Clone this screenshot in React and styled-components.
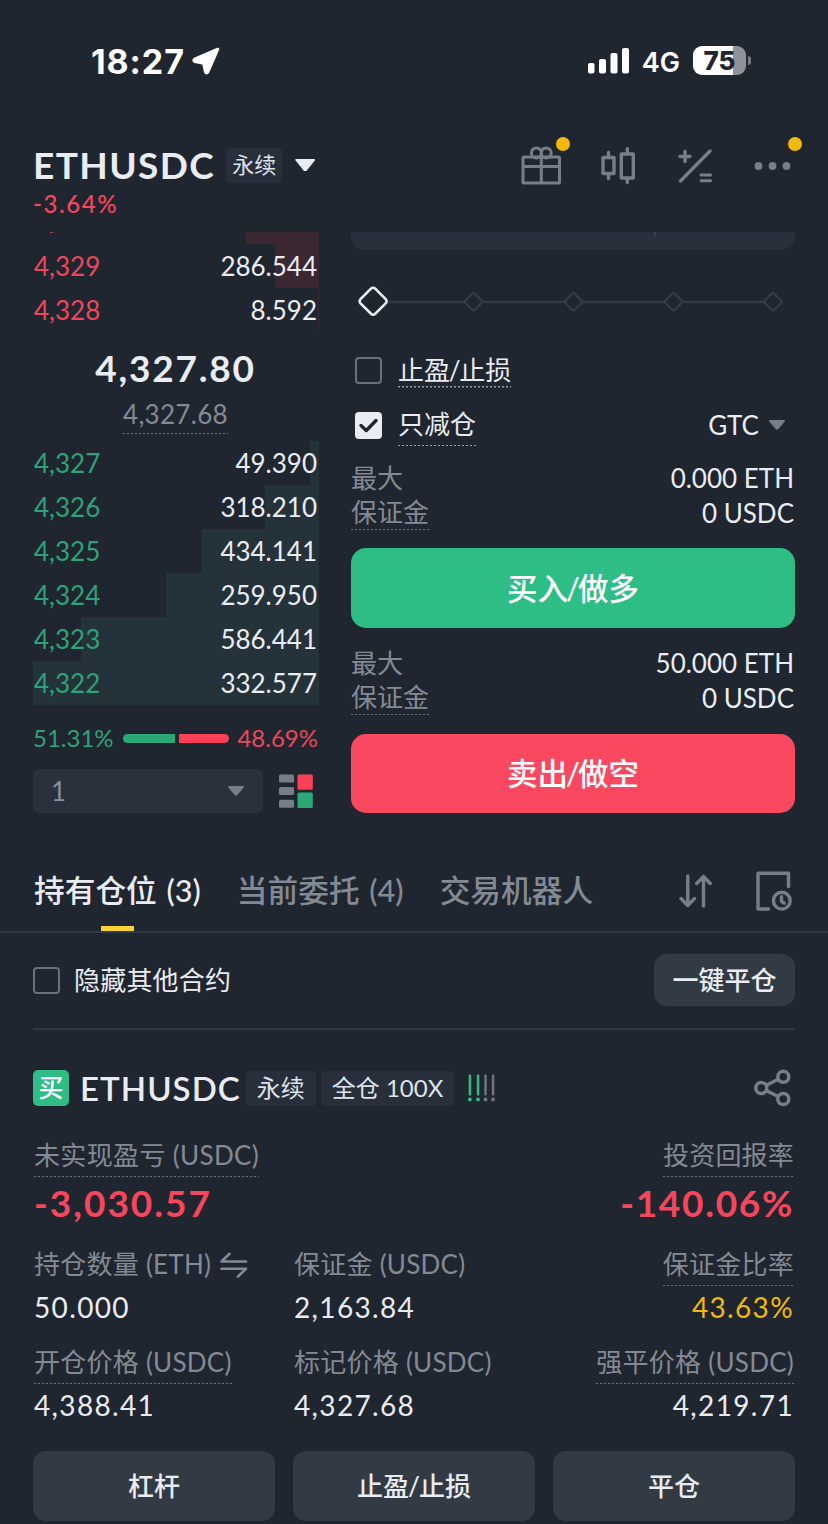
import styled, { createGlobalStyle } from "styled-components";

const GlobalStyle = createGlobalStyle`
    * { box-sizing: border-box; }
    body {
        margin: 0;
        background: #20262f;
        color: #eaecf3;
        font-family: Lato, "Noto Sans CJK SC", sans-serif;
        font-size: 26px;
    }
    button, h1, h2 { font: inherit; margin: 0; padding: 0; border: 0; }
    svg { display: block; flex: none; }
`;

const GRAY = "#787e89";
const LABEL = "#848a94";
const RED = "#f6465d";
const GREEN = "#2ebd85";

const Screen = styled.div`
    width: 828px;
    height: 1524px;
    overflow: hidden;
    display: flex;
    flex-direction: column;
`;

/* ---------- text ---------- */
const Text = styled.span`
    display: block;
    flex: none;
    white-space: nowrap;
    font-size: ${p => p.$size || 26}px;
    line-height: ${p => p.$lh || 36}px;
    font-weight: ${p => p.$weight || 400};
    color: ${p => p.$color || "#eaecf3"};
    letter-spacing: ${p => p.$ls || 0}px;
    word-spacing: ${p => p.$ws || 0}px;
`;
const Dotted = styled(Text)`
    width: fit-content;
    padding-top: ${p => p.$pt || 0}px;
    padding-bottom: ${p => p.$gap || 0}px;
    background: repeating-linear-gradient(90deg, ${p => p.$dot || "#6c727c"} 0 2px, transparent 2px 4px) left bottom / 100% 1.5px no-repeat;
`;
const Slash = styled.span`
    margin: 0 ${p => p.$m || -2}px;
`;

/* ---------- status bar ---------- */
const StatusBar = styled.div`
    height: 121px;
    padding: 0 77px 0 91px;
    display: flex;
    justify-content: space-between;
    align-items: center;
    font-family: Inter, sans-serif;
    color: #fff;
`;
const Time = styled.div`
    display: flex;
    align-items: center;
    gap: 7px;
    padding-top: 1px;
    font-size: 34px;
    font-weight: 700;
    letter-spacing: 0.9px;
`;
const Signal = styled.div`
    display: flex;
    align-items: center;
    font-size: 27px;
    font-weight: 600;
`;
const Network = styled.span`
    margin: 3px 13px 0 13px;
`;
const Battery = styled.div`
    width: 53px;
    height: 29px;
    border-radius: 9px;
    background: linear-gradient(90deg, #fff 75%, #8f929b 75%);
    color: #20262f;
    font-size: 26px;
    line-height: 29px;
    font-weight: 800;
    text-align: center;
`;
const BatteryTip = styled.div`
    width: 3px;
    height: 9px;
    margin-left: 2px;
    border-radius: 0 4px 4px 0;
    background: #767a84;
`;

/* ---------- header ---------- */
const Header = styled.header`
    height: 111px;
    padding: 22px 36px 0 33px;
    display: flex;
    justify-content: space-between;
`;
const PairRow = styled.div`
    height: 44px;
    display: flex;
    align-items: center;
`;
const Tag = styled.span`
    height: ${p => p.$h || 35}px;
    line-height: ${p => (p.$h || 35) - 1}px;
    padding: 0 ${p => p.$px}px;
    margin-left: ${p => p.$ml}px;
    border-radius: 4px;
    background: #282e3a;
    font-size: ${p => p.$size || 24}px;
    color: #dfe2ea;
    white-space: nowrap;
`;
const HeaderIcons = styled.div`
    height: 44px;
    display: flex;
    align-items: center;
    gap: 37px;
`;
const IconWrap = styled.div`
    position: relative;
`;
const Dot = styled.i`
    position: absolute;
    width: 14px;
    height: 14px;
    border-radius: 50%;
    background: #f0b90b;
    top: ${p => p.$top}px;
    right: ${p => p.$right}px;
`;

/* ---------- trade area ---------- */
const Trade = styled.section`
    height: 608px;
    padding: 0 33px;
    display: flex;
    justify-content: space-between;
`;
const Book = styled.div`
    width: 286px;
    display: flex;
    flex-direction: column;
`;
const BookRow = styled.div`
    height: 44px;
    display: flex;
    justify-content: space-between;
    align-items: center;
    padding: 0 2px 0 1px;
    background: linear-gradient(${p => p.$bg}, ${p => p.$bg}) right top / ${p => p.$depth}px 100% no-repeat;
`;
const ClippedRow = styled(BookRow)`
    height: 12px;
    align-items: flex-start;
    padding-left: 17px;
`;
const CommaTail = styled.i`
    width: 3px;
    height: 1px;
    background: #a8384a;
`;
const Mid = styled.div`
    height: 109px;
    display: flex;
    flex-direction: column;
    align-items: center;
    padding: 13px 1px 0 0;
`;
const Ratio = styled.div`
    height: 64px;
    padding: 2px 1px 0 0;
    display: flex;
    align-items: center;
    justify-content: space-between;
`;
const RatioBar = styled.div`
    display: grid;
    grid-template-columns: 52px 50px;
    gap: 4px;
    height: 9px;
`;
const RatioPart = styled.div`
    background: ${p => p.$bg};
    border-radius: ${p => p.$r};
`;
const BookTools = styled.div`
    display: flex;
    align-items: center;
    justify-content: space-between;
    padding-right: 6px;
`;
const Select = styled.div`
    width: 230px;
    height: 44px;
    padding: 0 19px 0 18px;
    border-radius: 7px;
    background: #2a303c;
    display: flex;
    align-items: center;
    justify-content: space-between;
`;

const Form = styled.div`
    width: 444px;
    display: flex;
    flex-direction: column;
`;
const InputBottom = styled.div`
    height: 18px;
    border-radius: 0 0 14px 14px;
    background: #29303c;
    display: flex;
    justify-content: flex-end;
    padding-right: 139px;
`;
const InputDivider = styled.div`
    width: 2px;
    height: 4px;
    background: #39404b;
`;
const SliderWrap = styled.div`
    height: 103px;
    display: flex;
    align-items: center;
`;
const CheckRow = styled.div`
    height: ${p => p.$h}px;
    display: flex;
    align-items: center;
    padding: ${p => p.$pt || 0}px 10px 0 4px;
    gap: 16px;
`;
const CheckLabel = styled.div`
    height: ${p => p.$h}px;
    flex: 1;
`;
const Box = styled.div`
    width: 27px;
    height: 27px;
    border-radius: 4px;
    border: 2px solid ${p => (p.$on ? "#eaecf3" : "#6b717c")};
    background: ${p => (p.$on ? "#eaecf3" : "transparent")};
    flex: none;
`;
const Caret = styled.i`
    width: ${p => p.$w || 16}px;
    height: ${p => p.$h || 10}px;
    margin-left: ${p => p.$ml || 0}px;
    background: ${p => p.$color || GRAY};
    clip-path: polygon(4% 0, 96% 0, 100% 12%, 56% 96%, 44% 96%, 0 12%);
`;
const Limits = styled.div`
    height: ${p => p.$h}px;
    padding: ${p => p.$pt}px 1px 0 0;
`;
const LimitRow = styled.div`
    height: 35px;
    display: flex;
    justify-content: space-between;
`;
const BigButton = styled.button`
    flex: none;
    height: ${p => p.$h}px;
    border-radius: 15px;
    background: ${p => p.$bg};
    color: #fff;
    font-size: 30.5px;
    font-weight: 500;
    line-height: 78px;
    padding-bottom: 1px;
`;

/* ---------- tabs ---------- */
const Tabs = styled.nav`
    height: 93px;
    padding: 0 36px 0 34px;
    border-bottom: 2px solid #343a44;
    display: flex;
    align-items: stretch;
`;
const Tab = styled.div`
    height: 92px;
    margin-right: 36px;
    display: flex;
    flex-direction: column;
    align-items: center;
    justify-content: space-between;
    padding-top: 29px;
`;
const TabLine = styled.div`
    width: 33px;
    height: 5px;
    margin-bottom: 1px;
    background: #fcd535;
`;
const TabIcons = styled.div`
    margin-left: auto;
    height: 101px;
    display: flex;
    align-items: center;
    gap: 43px;
`;
const Filter = styled.div`
    height: 97px;
    margin: 0 33px;
    border-bottom: 2px solid #333943;
    display: flex;
    align-items: center;
    gap: 14px;
    padding-bottom: 1px;
`;
const SoftButton = styled.button`
    height: ${p => p.$h}px;
    width: ${p => p.$w}px;
    border-radius: 13px;
    background: #323b44;
    color: #eaecf3;
    font-weight: 500;
    font-size: 26px;
    line-height: ${p => p.$h}px;
`;
const Push = styled.div`
    margin-left: auto;
`;

/* ---------- position card ---------- */
const Card = styled.section`
    padding: 40px 33px 0;
`;
const CardHead = styled.div`
    height: 36px;
    display: flex;
    align-items: center;
    padding-right: 4px;
`;
const Side = styled.span`
    width: 36px;
    height: 36px;
    margin-right: 11px;
    border-radius: 5px;
    background: ${GREEN};
    color: #fff;
    font-size: 25px;
    font-weight: 500;
    line-height: 35px;
    text-align: center;
`;
const Risk = styled.div`
    margin-left: 14px;
`;
const Pnl = styled.div`
    height: 140px;
    padding: 31px 1px 0;
    display: flex;
    justify-content: space-between;
`;
const Grid = styled.div`
    display: grid;
    grid-template-columns: 260px 260px 1fr;
    padding: 0 1px;
`;
const Cell = styled.div`
    height: 98px;
    display: flex;
    flex-direction: column;
    align-items: ${p => (p.$end ? "flex-end" : "flex-start")};
`;
const LabelLine = styled.div`
    height: ${p => p.$h || 43}px;
    display: flex;
    align-items: flex-start;
    gap: 9px;
`;
const SwapWrap = styled.div`
    padding-top: 6px;
`;
const Actions = styled.div`
    display: grid;
    grid-template-columns: repeat(3, 242px);
    justify-content: space-between;
    padding-top: 9px;
`;

const asks = [
    { price: "4,329", size: "286.544", depth: 44 },
    { price: "4,328", size: "8.592", depth: 1 },
];
const bids = [
    { price: "4,327", size: "49.390", depth: 9 },
    { price: "4,326", size: "318.210", depth: 54 },
    { price: "4,325", size: "434.141", depth: 117 },
    { price: "4,324", size: "259.950", depth: 153 },
    { price: "4,323", size: "586.441", depth: 238 },
    { price: "4,322", size: "332.577", depth: 286 },
];

function LocationArrow() {
    return (
        <svg width="28" height="28" viewBox="0 0 28 28" fill="#fff" stroke="#fff" strokeWidth="3" strokeLinejoin="round">
            <path d="M25.8 2.2 2.6 12.2Q1 13.4 2.8 14.6L11.6 16.2 13.4 25Q14.6 26.8 15.8 25.2Z" />
        </svg>
    );
}

function SignalBars() {
    return (
        <svg width="41" height="27" viewBox="0 0 41 27" fill="#fff">
            <rect x="0" y="16" width="6.5" height="10.5" rx="2" />
            <rect x="11" y="12" width="7" height="14.5" rx="2" />
            <rect x="22.5" y="6" width="7" height="20.5" rx="2" />
            <rect x="34" y="1" width="7" height="25.5" rx="2" />
        </svg>
    );
}

function GiftIcon() {
    return (
        <svg width="40" height="40" viewBox="0 0 40 40" fill="none" stroke={GRAY} strokeWidth="3" strokeLinejoin="round">
            <rect x="2" y="12" width="36.5" height="26" rx="1" />
            <path d="M2 21.5H38.5M20.3 11V38" />
            <circle cx="15.4" cy="7.9" r="5" />
            <circle cx="25.2" cy="7.9" r="5" />
        </svg>
    );
}

function CandleIcon() {
    return (
        <svg width="40" height="40" viewBox="0 0 40 40" fill="none" stroke={GRAY} strokeWidth="3.4" strokeLinecap="round" strokeLinejoin="round">
            <rect x="5" y="12.5" width="11" height="16" />
            <path d="M10.5 7.5V12M10.5 29V33.5" />
            <rect x="23.3" y="9" width="12" height="24" />
            <path d="M29.3 3.8V8.5M29.3 33.5V37.5" />
        </svg>
    );
}

function CalcIcon() {
    return (
        <svg width="40" height="40" viewBox="0 0 40 40" fill="none" stroke={GRAY} strokeWidth="3.4" strokeLinecap="round">
            <path d="M5.5 36 35 6" />
            <path d="M5 11.5H15M10 6.5V16.5" />
            <path d="M26 30H35.5M26 35.8H35.5" strokeWidth="3" />
        </svg>
    );
}

function MoreIcon() {
    return (
        <svg width="40" height="40" viewBox="0 0 40 40" fill={GRAY}>
            <circle cx="6.5" cy="21" r="3.9" />
            <circle cx="20.5" cy="21" r="3.9" />
            <circle cx="34.5" cy="21" r="3.9" />
        </svg>
    );
}

function Slider() {
    return (
        <svg width="444" height="40" viewBox="0 0 444 40" fill="#20262f" strokeLinejoin="round">
            <path d="M22 20H422" stroke="#323943" strokeWidth="2.5" />
            {[122.5, 222.5, 322.5, 422].map(x => (
                <rect key={x} x={x - 6.6} y={13.2} width="13.2" height="13.2" rx="2" stroke="#343b45" strokeWidth="2.2" transform={`rotate(45 ${x} 19.8)`} />
            ))}
            <rect x="11.7" y="8.8" width="20.8" height="20.8" rx="3" stroke="#eaecf3" strokeWidth="2.6" transform="rotate(45 22.1 19.2)" />
        </svg>
    );
}

function BookModeIcon() {
    return (
        <svg width="34" height="34" viewBox="0 0 34 34">
            <g fill={GRAY}>
                <rect x="0" y="0.5" width="15" height="8" rx="1.5" />
                <rect x="0" y="13" width="15" height="8" rx="1.5" />
                <rect x="0" y="25.7" width="15" height="8" rx="1.5" />
            </g>
            <rect x="18.5" y="0.5" width="15.3" height="15.3" rx="1.5" fill="#fb4058" />
            <rect x="18.5" y="18.6" width="15.3" height="15.3" rx="1.5" fill="#2aa876" />
        </svg>
    );
}

function SortIcon() {
    return (
        <svg width="33" height="34" viewBox="0 0 33 34" fill="none" stroke={GRAY} strokeWidth="3.4" strokeLinecap="round" strokeLinejoin="round">
            <path d="M8.8 2V31.5M2 24.5 8.8 31.5 15.5 24.5" />
            <path d="M24.5 32V2.5M17.7 9.5 24.5 2.5 31.2 9.5" />
        </svg>
    );
}

function HistoryIcon() {
    return (
        <svg width="37" height="40" viewBox="0 0 37 40" fill="none" stroke={GRAY} strokeWidth="3.4" strokeLinecap="round" strokeLinejoin="round">
            <path d="M13.5 38H3V2.3H33.5V15.5" />
            <circle cx="26.8" cy="29.7" r="8.4" />
            <path d="M26.5 25.8V30.3L29.2 32.2" />
        </svg>
    );
}

function RiskIcon() {
    return (
        <svg width="28" height="28" viewBox="0 0 28 28">
            {[1.9, 10, 17.5, 25].map((x, i) => (
                <g key={x} fill={i < 2 ? GREEN : "#6f7580"}>
                    <rect x={x - 1.2} y="0.5" width="2.5" height="21" rx="1" />
                    <circle cx={x} cy="25.5" r="1.9" />
                </g>
            ))}
        </svg>
    );
}

function ShareIcon() {
    return (
        <svg width="37" height="38" viewBox="0 0 37 38" fill="none" stroke={GRAY} strokeWidth="3.5">
            <circle cx="7.3" cy="19" r="5.5" />
            <circle cx="29.3" cy="7.8" r="5.5" />
            <circle cx="29.3" cy="30" r="5.5" />
            <path d="M12.3 16.3 24.3 10.3M12.3 21.7 24.3 27.5" />
        </svg>
    );
}

function SwapIcon() {
    return (
        <svg width="28" height="26" viewBox="0 0 28 26" fill="none" stroke={LABEL} strokeWidth="2.6" strokeLinecap="round" strokeLinejoin="round">
            <path d="M26 9.5H1.5L9.5 1.8" />
            <path d="M1.5 16.7H26L18 24.5" />
        </svg>
    );
}

function MaxInfo({ amount, pt, h }) {
    return (
        <Limits $pt={pt} $h={h}>
            <LimitRow>
                <Text $color={LABEL}>最大</Text>
                <Text>{amount}</Text>
            </LimitRow>
            <LimitRow>
                <Dotted $color={LABEL} $lh={34}>保证金</Dotted>
                <Text>0 USDC</Text>
            </LimitRow>
        </Limits>
    );
}

function OrderBook() {
    return (
        <Book>
            <ClippedRow $bg="#3a2731" $depth={73}>
                <CommaTail />
            </ClippedRow>
            {asks.map(r => (
                <BookRow key={r.price} $bg="#3a2731" $depth={r.depth}>
                    <Text $color="#ee465c">{r.price}</Text>
                    <Text>{r.size}</Text>
                </BookRow>
            ))}
            <Mid>
                <Text $size={37} $lh={46} $weight={700} $ls={1.8}>4,327.80</Text>
                <Dotted $color={LABEL} $lh={40} $pt={3} $ls={0.3}>4,327.68</Dotted>
            </Mid>
            {bids.map(r => (
                <BookRow key={r.price} $bg="#243339" $depth={r.depth}>
                    <Text $color="#2ea27a">{r.price}</Text>
                    <Text>{r.size}</Text>
                </BookRow>
            ))}
            <Ratio>
                <Text $size={24} $color="#2ea27a">51.31%</Text>
                <RatioBar>
                    <RatioPart $bg="#2aa876" $r="5px 0 0 5px" />
                    <RatioPart $bg="#fb4058" $r="0 5px 5px 0" />
                </RatioBar>
                <Text $size={24} $color="#ee465c">48.69%</Text>
            </Ratio>
            <BookTools>
                <Select>
                    <Text $color="#8a909b">1</Text>
                    <Caret />
                </Select>
                <BookModeIcon />
            </BookTools>
        </Book>
    );
}

function OrderForm() {
    return (
        <Form>
            <InputBottom><InputDivider /></InputBottom>
            <SliderWrap><Slider /></SliderWrap>
            <CheckRow $h={35}>
                <Box />
                <CheckLabel $h={36}>
                    <Dotted $lh={35} $dot="#9ba0aa">止盈<Slash $m={-1.3}>/</Slash>止损</Dotted>
                </CheckLabel>
            </CheckRow>
            <CheckRow $h={72} $pt={2}>
                <Box $on>
                    <svg width="23" height="23" viewBox="0 0 23 23" fill="none" stroke="#20262f" strokeWidth="3.4" strokeLinecap="round" strokeLinejoin="round">
                        <path d="M4 11.5 9.3 16.5 19 6.5" />
                    </svg>
                </Box>
                <CheckLabel $h={40}>
                    <Dotted $lh={38} $gap={3} $dot="#9ba0aa">只减仓</Dotted>
                </CheckLabel>
                <Text>GTC</Text>
                <Caret $ml={-6} />
            </CheckRow>
            <MaxInfo amount="0.000 ETH" pt={0} h={88} />
            <BigButton $h={80} $bg={GREEN}>买入<Slash>/</Slash>做多</BigButton>
            <MaxInfo amount="50.000 ETH" pt={17} h={106} />
            <BigButton $h={79} $bg="#f9485f">卖出<Slash>/</Slash>做空</BigButton>
        </Form>
    );
}

function Metric({ label, value, end, dotted, color, icon }) {
    const Label = dotted ? Dotted : Text;
    return (
        <Cell $end={end}>
            <LabelLine>
                <Label $color={LABEL} $lh={36} $gap={4} $ls={0.25}>{label}</Label>
                {icon}
            </LabelLine>
            <Text $size={28} $lh={36} $color={color} $ls={1.35}>{value}</Text>
        </Cell>
    );
}

export default function App() {
    return (
        <Screen>
            <GlobalStyle />
            <StatusBar>
                <Time>18:27 <LocationArrow /></Time>
                <Signal>
                    <SignalBars />
                    <Network>4G</Network>
                    <Battery>75</Battery>
                    <BatteryTip />
                </Signal>
            </StatusBar>

            <Header>
                <div>
                    <PairRow>
                        <Text as="h1" $size={37} $lh={44} $weight={700} $ls={1.4}>ETHUSDC</Text>
                        <Tag $px={6} $ml={11} $size={22}>永续</Tag>
                        <Caret $w={20} $h={13} $ml={13} $color="#eaecf3" />
                    </PairRow>
                    <Text $size={24} $weight={500} $color={RED} $lh={33} $ls={1.6}>-3.64%</Text>
                </div>
                <HeaderIcons>
                    <IconWrap><GiftIcon /><Dot $top={-8} $right={-9} /></IconWrap>
                    <CandleIcon />
                    <CalcIcon />
                    <IconWrap><MoreIcon /><Dot $top={-8} $right={-10} /></IconWrap>
                </HeaderIcons>
            </Header>

            <Trade>
                <OrderBook />
                <OrderForm />
            </Trade>

            <Tabs>
                <Tab>
                    <Text $size={30.7} $lh={44} $weight={500} $ws={2}>持有仓位 (3)</Text>
                    <TabLine />
                </Tab>
                <Tab><Text $size={30.7} $lh={44} $weight={500} $ws={2} $color={LABEL}>当前委托 (4)</Text></Tab>
                <Tab><Text $size={30.7} $lh={44} $weight={500} $color={LABEL}>交易机器人</Text></Tab>
                <TabIcons>
                    <SortIcon />
                    <HistoryIcon />
                </TabIcons>
            </Tabs>

            <Filter>
                <Box />
                <Text $ls={0.2}>隐藏其他合约</Text>
                <Push><SoftButton $w={141} $h={52}>一键平仓</SoftButton></Push>
            </Filter>

            <Card>
                <CardHead>
                    <Side>买</Side>
                    <Text as="h2" $size={33} $lh={36} $weight={600} $ls={1.05}>ETHUSDC</Text>
                    <Tag $px={11} $ml={5}>永续</Tag>
                    <Tag $px={11} $ml={5}>全仓 100X</Tag>
                    <Risk><RiskIcon /></Risk>
                    <Push><ShareIcon /></Push>
                </CardHead>
                <Pnl>
                    <Cell>
                        <LabelLine $h={44}>
                            <Dotted $color={LABEL} $lh={36} $gap={4} $ls={0.35}>未实现盈亏 (USDC)</Dotted>
                        </LabelLine>
                        <Text $size={37} $lh={44} $weight={700} $color={RED} $ls={2}>-3,030.57</Text>
                    </Cell>
                    <Cell $end>
                        <LabelLine $h={44}>
                            <Dotted $color={LABEL} $lh={36} $gap={4} $ls={0.2}>投资回报率</Dotted>
                        </LabelLine>
                        <Text $size={37} $lh={44} $weight={700} $color={RED} $ls={1.7}>-140.06%</Text>
                    </Cell>
                </Pnl>
                <Grid>
                    <Metric label="持仓数量 (ETH)" value="50.000" icon={<SwapWrap><SwapIcon /></SwapWrap>} />
                    <Metric label="保证金 (USDC)" value="2,163.84" />
                    <Metric label="保证金比率" value="43.63%" color="#f0b90b" end dotted />
                    <Metric label="开仓价格 (USDC)" value="4,388.41" dotted />
                    <Metric label="标记价格 (USDC)" value="4,327.68" />
                    <Metric label="强平价格 (USDC)" value="4,219.71" end dotted />
                </Grid>
                <Actions>
                    <SoftButton $w={242} $h={70}>杠杆</SoftButton>
                    <SoftButton $w={242} $h={70}>止盈<Slash $m={-1}>/</Slash>止损</SoftButton>
                    <SoftButton $w={242} $h={70}>平仓</SoftButton>
                </Actions>
            </Card>
        </Screen>
    );
}
